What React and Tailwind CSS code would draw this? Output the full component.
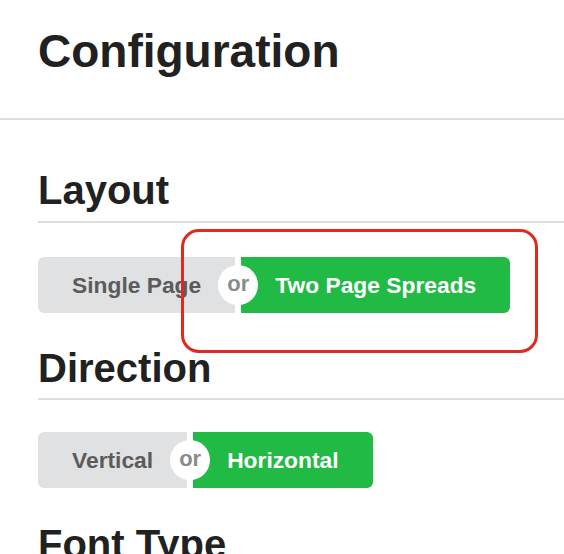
import React, { useState } from 'react';

const ToggleGroup = ({ left, right, value, onChange }) => {
  const btn = 'h-[56px] px-[34px] flex items-center text-[22.8px] font-bold leading-none';
  return (
    <div className="flex">
      <button
        onClick={() => onChange(left)}
        className={`${btn} rounded-l-[6px] ${value === left ? 'bg-[#21ba45] text-white' : 'bg-[#e0e1e2] text-[#5b5b5b]'}`}
      >
        {left}
      </button>
      <div className="relative w-[6px]">
        <span className="absolute left-1/2 top-1/2 -translate-x-1/2 -translate-y-1/2 w-[40px] h-[40px] rounded-full bg-white flex items-center justify-center text-[22px] font-bold text-[#8a8a8a] leading-none pb-[3px]">
          or
        </span>
      </div>
      <button
        onClick={() => onChange(right)}
        className={`${btn} rounded-r-[6px] ${value === right ? 'bg-[#21ba45] text-white' : 'bg-[#e0e1e2] text-[#5b5b5b]'}`}
      >
        {right}
      </button>
    </div>
  );
};

const SectionTitle = ({ children, className = '' }) => (
  <h2 className={`text-[40px] leading-[48px] font-bold text-[#212121] border-b-2 border-[#dedede] ${className}`}>
    {children}
  </h2>
);

export default function App() {
  const [layout, setLayout] = useState('Two Page Spreads');
  const [direction, setDirection] = useState('Horizontal');

  return (
    <div className="relative w-[564px] h-[554px] overflow-hidden bg-white font-['Liberation_Sans',Arial,sans-serif]">
      <div className="pl-[38px] pt-[28px] pb-[44px] border-b-2 border-[#dedede]">
        <h1 className="text-[46px] leading-[46px] font-bold text-[#212121]">Configuration</h1>
      </div>

      <div className="pl-[38px]">
        <SectionTitle className="mt-[46px] pb-[7px]">Layout</SectionTitle>
        <div className="mt-[34px]">
          <ToggleGroup left="Single Page" right="Two Page Spreads" value={layout} onChange={setLayout} />
        </div>

        <SectionTitle className="mt-[31px] pb-[6px]">Direction</SectionTitle>
        <div className="mt-[32px]">
          <ToggleGroup left="Vertical" right="Horizontal" value={direction} onChange={setDirection} />
        </div>

        <SectionTitle className="mt-[32px] pb-[6px]">Font Type</SectionTitle>
      </div>

      {/* highlight annotation */}
      <div className="absolute left-[181px] top-[229px] w-[357px] h-[124px] border-[3px] border-[#e02a1d] rounded-[18px] pointer-events-none" />
    </div>
  );
}
